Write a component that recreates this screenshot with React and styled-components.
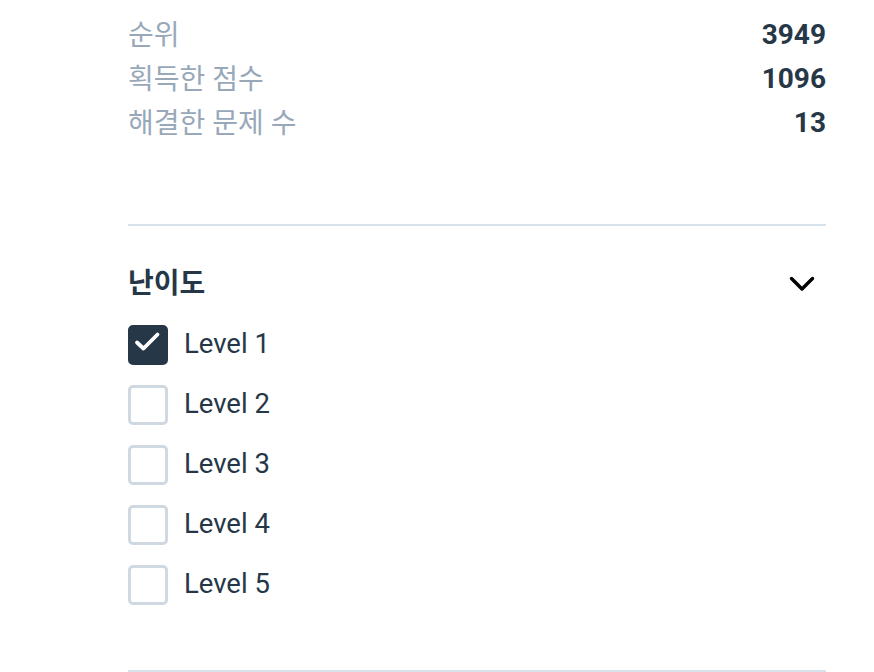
import React, { useState } from "react";
import styled, { createGlobalStyle } from "styled-components";

const Global = createGlobalStyle`
  body {
    margin: 0;
    background: #ffffff;
    font-family: Roboto, "Noto Sans CJK KR", sans-serif;
    color: #263747;
  }
`;

const stats = [
  { label: "순위", value: 3949 },
  { label: "획득한 점수", value: 1096 },
  { label: "해결한 문제 수", value: 13 },
];

const levels = [1, 2, 3, 4, 5];

const Page = styled.div`
  width: 698px;
  padding: 12px 0 0 128px;
`;

const StatList = styled.ul`
  list-style: none;
  margin: 0;
  padding: 0 0 80px 0;
  border-bottom: 2px solid #d7e2eb;
`;

const StatRow = styled.li`
  display: flex;
  justify-content: space-between;
  align-items: center;
  height: 44px;
  font-size: 28px;
`;

const StatLabel = styled.span`
  color: #98a8b9;
  margin-top: -3px;
`;

const StatValue = styled.span`
  font-weight: 700;
  color: #263747;
`;

const Filter = styled.section`
  padding: 36px 0 65px 0;
  border-bottom: 2px solid #d7e2eb;
`;

const FilterHead = styled.div`
  display: flex;
  justify-content: space-between;
  align-items: center;
  height: 40px;
  margin-bottom: 23px;
`;

const FilterTitle = styled.h3`
  margin: -3px 0 0 0;
  font-size: 28px;
  font-weight: 700;
  color: #263747;
`;

const Toggle = styled.button`
  border: none;
  background: none;
  padding: 0;
  margin: 3px 11px 0 0;
  display: flex;
  cursor: pointer;
`;

const Options = styled.div`
  display: flex;
  flex-direction: column;
  gap: 20px;
`;

const Option = styled.label`
  display: flex;
  align-items: center;
  gap: 16px;
  height: 40px;
  font-size: 27.5px;
  color: #263747;
  cursor: pointer;
`;

const OptionText = styled.span`
  margin-top: -3px;
`;

const Box = styled.span`
  box-sizing: border-box;
  width: 40px;
  height: 40px;
  border-radius: 5px;
  border: 3px solid ${(p) => (p.$on ? "#263747" : "#d0d9e2")};
  background: ${(p) => (p.$on ? "#263747" : "#ffffff")};
  display: flex;
  align-items: center;
  justify-content: center;
`;

const App = () => {
  const [checked, setChecked] = useState([1]);

  const flip = (lv) => {
    setChecked((c) => (c.includes(lv) ? c.filter((x) => x !== lv) : [...c, lv]));
  };

  return (
    <>
      <Global />
      <Page>
        <StatList>
          {stats.map((s) => (
            <StatRow key={s.label}>
              <StatLabel>{s.label}</StatLabel>
              <StatValue>{s.value}</StatValue>
            </StatRow>
          ))}
        </StatList>
        <Filter>
          <FilterHead>
            <FilterTitle>난이도</FilterTitle>
            <Toggle>
              <svg width="26" height="16" viewBox="0 0 26 16" fill="none">
                <path d="M2.5 2.5 L13 13 L23.5 2.5" stroke="#000" strokeWidth="3.4" strokeLinecap="round" strokeLinejoin="round" />
              </svg>
            </Toggle>
          </FilterHead>
          <Options>
            {levels.map((lv) => (
              <Option key={lv} onClick={() => flip(lv)}>
                <Box $on={checked.includes(lv)}>
                  {checked.includes(lv) && (
                    <svg width="34" height="34" viewBox="0 0 34 34" fill="none">
                      <path d="M6 14.5 L12.5 20.5 L26.5 6.5" stroke="#fff" strokeWidth="3.8" strokeLinecap="round" strokeLinejoin="round" />
                    </svg>
                  )}
                </Box>
                <OptionText>Level {lv}</OptionText>
              </Option>
            ))}
          </Options>
        </Filter>
      </Page>
    </>
  );
};

export default App;
